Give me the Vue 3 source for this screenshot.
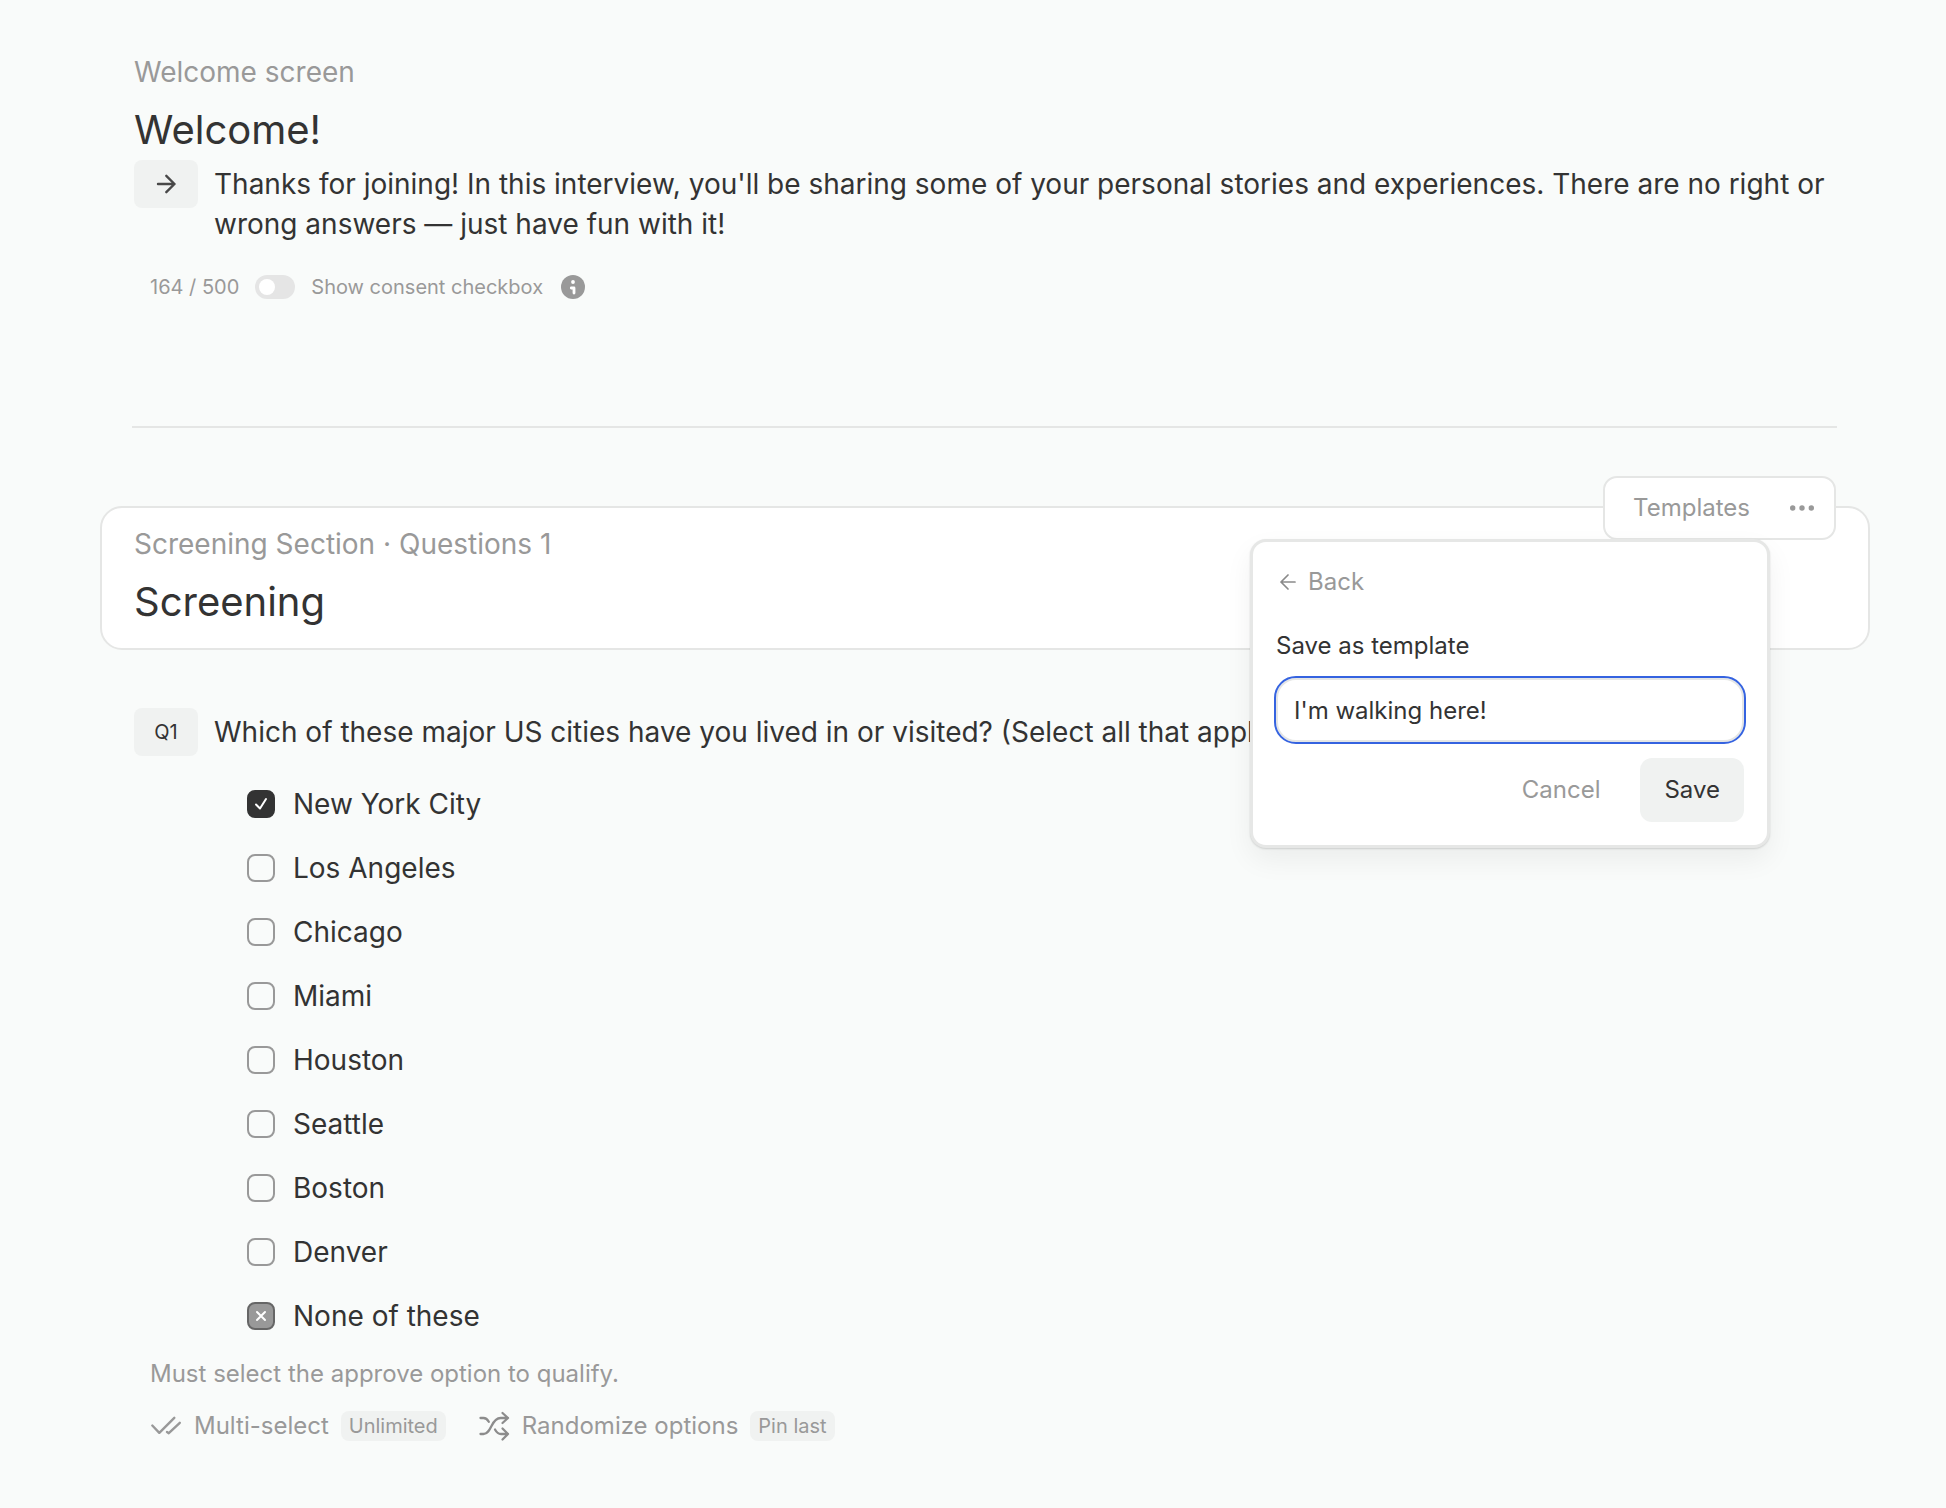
<script setup>
import { ref } from 'vue'

const options = ref([
  { label: 'New York City', state: 'approve' },
  { label: 'Los Angeles', state: '' },
  { label: 'Chicago', state: '' },
  { label: 'Miami', state: '' },
  { label: 'Houston', state: '' },
  { label: 'Seattle', state: '' },
  { label: 'Boston', state: '' },
  { label: 'Denver', state: '' },
  { label: 'None of these', state: 'reject' },
])
const templateName = ref("I'm walking here!")
const consent = ref(false)
</script>

<template>
  <main class="page">
    <section class="inner welcome">
      <p class="eyebrow">Welcome screen</p>
      <h1 class="title">Welcome!</h1>
      <div class="prompt">
        <span class="tag">
          <svg width="22" height="22" viewBox="0 0 22 22" fill="none" stroke="#484848" stroke-width="2.4" stroke-linecap="round" stroke-linejoin="round" aria-hidden="true"><path d="M3 11h16.5M11.3 2.8l8.2 8.2-8.2 8.2" /></svg>
        </span>
        <p class="body">Thanks for joining! In this interview, you'll be sharing some of your personal stories and experiences. There are no right or wrong answers — just have fun with it!</p>
      </div>
      <div class="consent">
        <span>164 / 500</span>
        <label class="switch-label">
          <input v-model="consent" type="checkbox" role="switch" class="switch" />
          <span>Show consent checkbox</span>
        </label>
        <svg class="info" width="24" height="24" viewBox="0 0 24 24" aria-hidden="true"><circle cx="12" cy="12" r="12" fill="#999" /><circle cx="12" cy="7" r="1.9" fill="#fff" /><path d="M10.3 13h2.7v5" fill="none" stroke="#fff" stroke-width="2.8" stroke-linecap="round" stroke-linejoin="round" /></svg>
      </div>
    </section>

    <hr class="rule" />

    <section class="card">
      <p class="eyebrow">Screening Section · Questions 1</p>
      <h2 class="title">Screening</h2>
      <div class="toolbar">
        <button type="button" class="ghost">Templates</button>
        <button type="button" class="more" aria-label="More">
          <svg width="24" height="6" viewBox="0 0 24 6" fill="#999" aria-hidden="true"><circle cx="2.7" cy="3" r="2.7" /><circle cx="12" cy="3" r="2.7" /><circle cx="21.3" cy="3" r="2.7" /></svg>
        </button>
      </div>
      <form class="popover" @submit.prevent>
        <button type="button" class="back">
          <svg width="16" height="16" viewBox="0 0 16 16" fill="none" stroke="#8a8a8a" stroke-width="1.7" stroke-linecap="round" stroke-linejoin="round" aria-hidden="true"><path d="M15 8H1M8 1L1 8l7 7" /></svg>
          <span>Back</span>
        </button>
        <label class="field-label" for="template-name">Save as template</label>
        <input id="template-name" v-model="templateName" type="text" class="field" />
        <div class="actions">
          <button type="button" class="ghost">Cancel</button>
          <button type="submit" class="save">Save</button>
        </div>
      </form>
    </section>

    <section class="inner question">
      <div class="prompt">
        <span class="tag">Q1</span>
        <p class="body">Which of these major US cities have you lived in or visited? (Select all that apply.)</p>
      </div>
      <ul class="options">
        <li v-for="option in options" :key="option.label">
          <label class="option">
            <span class="tick">
              <input type="checkbox" class="box" :class="option.state" :checked="option.state !== ''" />
              <svg v-if="option.state === 'approve'" class="mark" width="28" height="28" viewBox="0 0 28 28" fill="none" stroke="#fff" stroke-width="2" stroke-linecap="round" stroke-linejoin="round" aria-hidden="true"><path d="M9 14.5l4 4 6-9.5" /></svg>
              <svg v-if="option.state === 'reject'" class="mark" width="28" height="28" viewBox="0 0 28 28" fill="none" stroke="#fff" stroke-width="2" stroke-linecap="round" aria-hidden="true"><path d="M10 10l8 8M18 10l-8 8" /></svg>
            </span>
            <span>{{ option.label }}</span>
          </label>
        </li>
      </ul>
      <p class="hint">Must select the approve option to qualify.</p>
      <div class="settings">
        <button type="button" class="setting">
          <svg width="32" height="32" viewBox="0 0 32 32" fill="none" stroke="#999" stroke-width="2.4" stroke-linecap="round" stroke-linejoin="round" aria-hidden="true"><path d="M2.3 15.5l7 7.3L24.3 7.8M17 22l1.8 1.2L29.8 12.8" /></svg>
          <span>Multi-select</span>
          <span class="chip">Unlimited</span>
        </button>
        <button type="button" class="setting">
          <svg width="32" height="32" viewBox="0 0 32 32" fill="none" stroke="#8c8c8c" stroke-width="2.3" stroke-linecap="round" stroke-linejoin="round" aria-hidden="true"><path d="M2.5 8h3c2.5 0 4 1.500 5.300 3.800M2.500 24h3c4 0 6-4 8-8s5-8 9-8h7.500M17 19.500c1.500 2.800 3.500 4.500 6 4.500h7M24.500 3l5.500 5-5.500 5M24.500 18.500l5.500 5.500-5.500 5.500" /></svg>
          <span>Randomize options</span>
          <span class="chip">Pin last</span>
        </button>
      </div>
    </section>
  </main>
</template>

<style>
body {
  background: #f9fbfa;
}
</style>

<style scoped>
.page {
  padding: 52px 76px 64px 100px;
  color: #333;
  font: 28px/40px Inter, "Liberation Sans", sans-serif;
}
p, h1, h2, ul {
  margin: 0;
  padding: 0;
}
button {
  border: 0;
  background: none;
  padding: 0;
  font: inherit;
  color: inherit;
}
.inner {
  padding: 0 34px;
}
.eyebrow {
  color: #999;
}
.title {
  font-size: 40px;
  font-weight: 400;
  line-height: 56px;
  margin-top: 10px;
}
.prompt {
  display: flex;
  align-items: flex-start;
  gap: 16px;
}
.prompt .body {
  flex: 1;
  padding-top: 4px;
}
.tag {
  display: flex;
  align-items: center;
  justify-content: center;
  width: 64px;
  height: 48px;
  border-radius: 8px;
  background: #f0f2f1;
  font-size: 20px;
  line-height: 28px;
}
.welcome .prompt {
  margin-top: 2px;
}
.consent {
  display: flex;
  align-items: center;
  gap: 18px;
  height: 28px;
  margin: 29px 0 0 16px;
  color: #999;
  font-size: 20px;
  line-height: 28px;
}
.consent > span {
  margin-right: -2px;
}
.switch-label {
  display: flex;
  align-items: center;
  gap: 16px;
}
.switch {
  appearance: none;
  box-sizing: border-box;
  width: 40px;
  height: 24px;
  margin: 0;
  padding: 4px;
  border-radius: 12px;
  background: #e5e5e5;
}
.switch::before {
  content: "";
  display: block;
  width: 16px;
  height: 16px;
  border-radius: 50%;
  background: #fff;
}
.rule {
  height: 2px;
  margin: 125px 33px 78px 32px;
  border: 0;
  background: #e5e6e5;
}
.card {
  position: relative;
  padding: 16px 32px 18px;
  border: 2px solid #e5e6e5;
  border-radius: 22px;
  background: #fff;
}
.toolbar {
  position: absolute;
  top: -32px;
  right: 32px;
  display: flex;
  align-items: center;
  gap: 40px;
  box-sizing: border-box;
  height: 64px;
  padding: 0 20px 0 28px;
  border: 2px solid #e5e6e5;
  border-radius: 14px;
  background: #fff;
  font-size: 24px;
  line-height: 32px;
}
.more {
  display: flex;
}
.ghost {
  color: #999;
}
.popover {
  position: absolute;
  z-index: 1;
  top: 31px;
  right: 98px;
  box-sizing: border-box;
  width: 520px;
  padding: 24px 23px 23px;
  border: 3px solid #e6e7e6;
  border-radius: 16px;
  background: #fff;
  box-shadow: 0 1px 2px rgba(0, 0, 0, 0.14), 0 12px 28px rgba(0, 0, 0, 0.06);
  font-size: 24px;
  line-height: 32px;
}
.back {
  display: flex;
  align-items: center;
  gap: 12px;
  padding-left: 4px;
  color: #999;
}
.field-label {
  display: block;
  margin: 32px 0 16px;
}
.field {
  display: block;
  box-sizing: border-box;
  width: 100%;
  height: 64px;
  padding: 0 16px;
  border: 2px solid #e5e6e5;
  outline: 2px solid #3563e0;
  border-radius: 20px;
  background: #fff;
  color: #333;
  font: inherit;
}
.actions {
  display: flex;
  justify-content: flex-end;
  gap: 40px;
  margin-top: 16px;
}
.save {
  height: 64px;
  padding: 0 24px;
  border-radius: 12px;
  background: #f0f2f1;
}
.question {
  padding-top: 58px;
}
.options {
  list-style: none;
  margin: 16px 0 0 113px;
}
.option {
  display: flex;
  align-items: center;
  gap: 18px;
  height: 64px;
}
.tick {
  position: relative;
  width: 28px;
  height: 28px;
}
.box {
  appearance: none;
  display: block;
  box-sizing: border-box;
  width: 28px;
  height: 28px;
  margin: 0;
  border: 2px solid #999;
  border-radius: 8px;
}
.box.approve {
  border-color: #333;
  background: #333;
}
.box.reject {
  border-color: #666;
  background: #999;
}
.mark {
  position: absolute;
  inset: 0;
}
.hint {
  margin: 10px 0 0 16px;
  color: #999;
  font-size: 24px;
  line-height: 32px;
}
.settings {
  display: flex;
  gap: 32px;
  margin: 20px 0 0 16px;
}
.setting {
  display: flex;
  align-items: center;
  gap: 12px;
  color: #999;
  font-size: 24px;
  line-height: 32px;
}
.chip {
  padding: 1px 8px;
  border-radius: 8px;
  background: #f0f2f1;
  font-size: 20px;
  line-height: 28px;
}
</style>
